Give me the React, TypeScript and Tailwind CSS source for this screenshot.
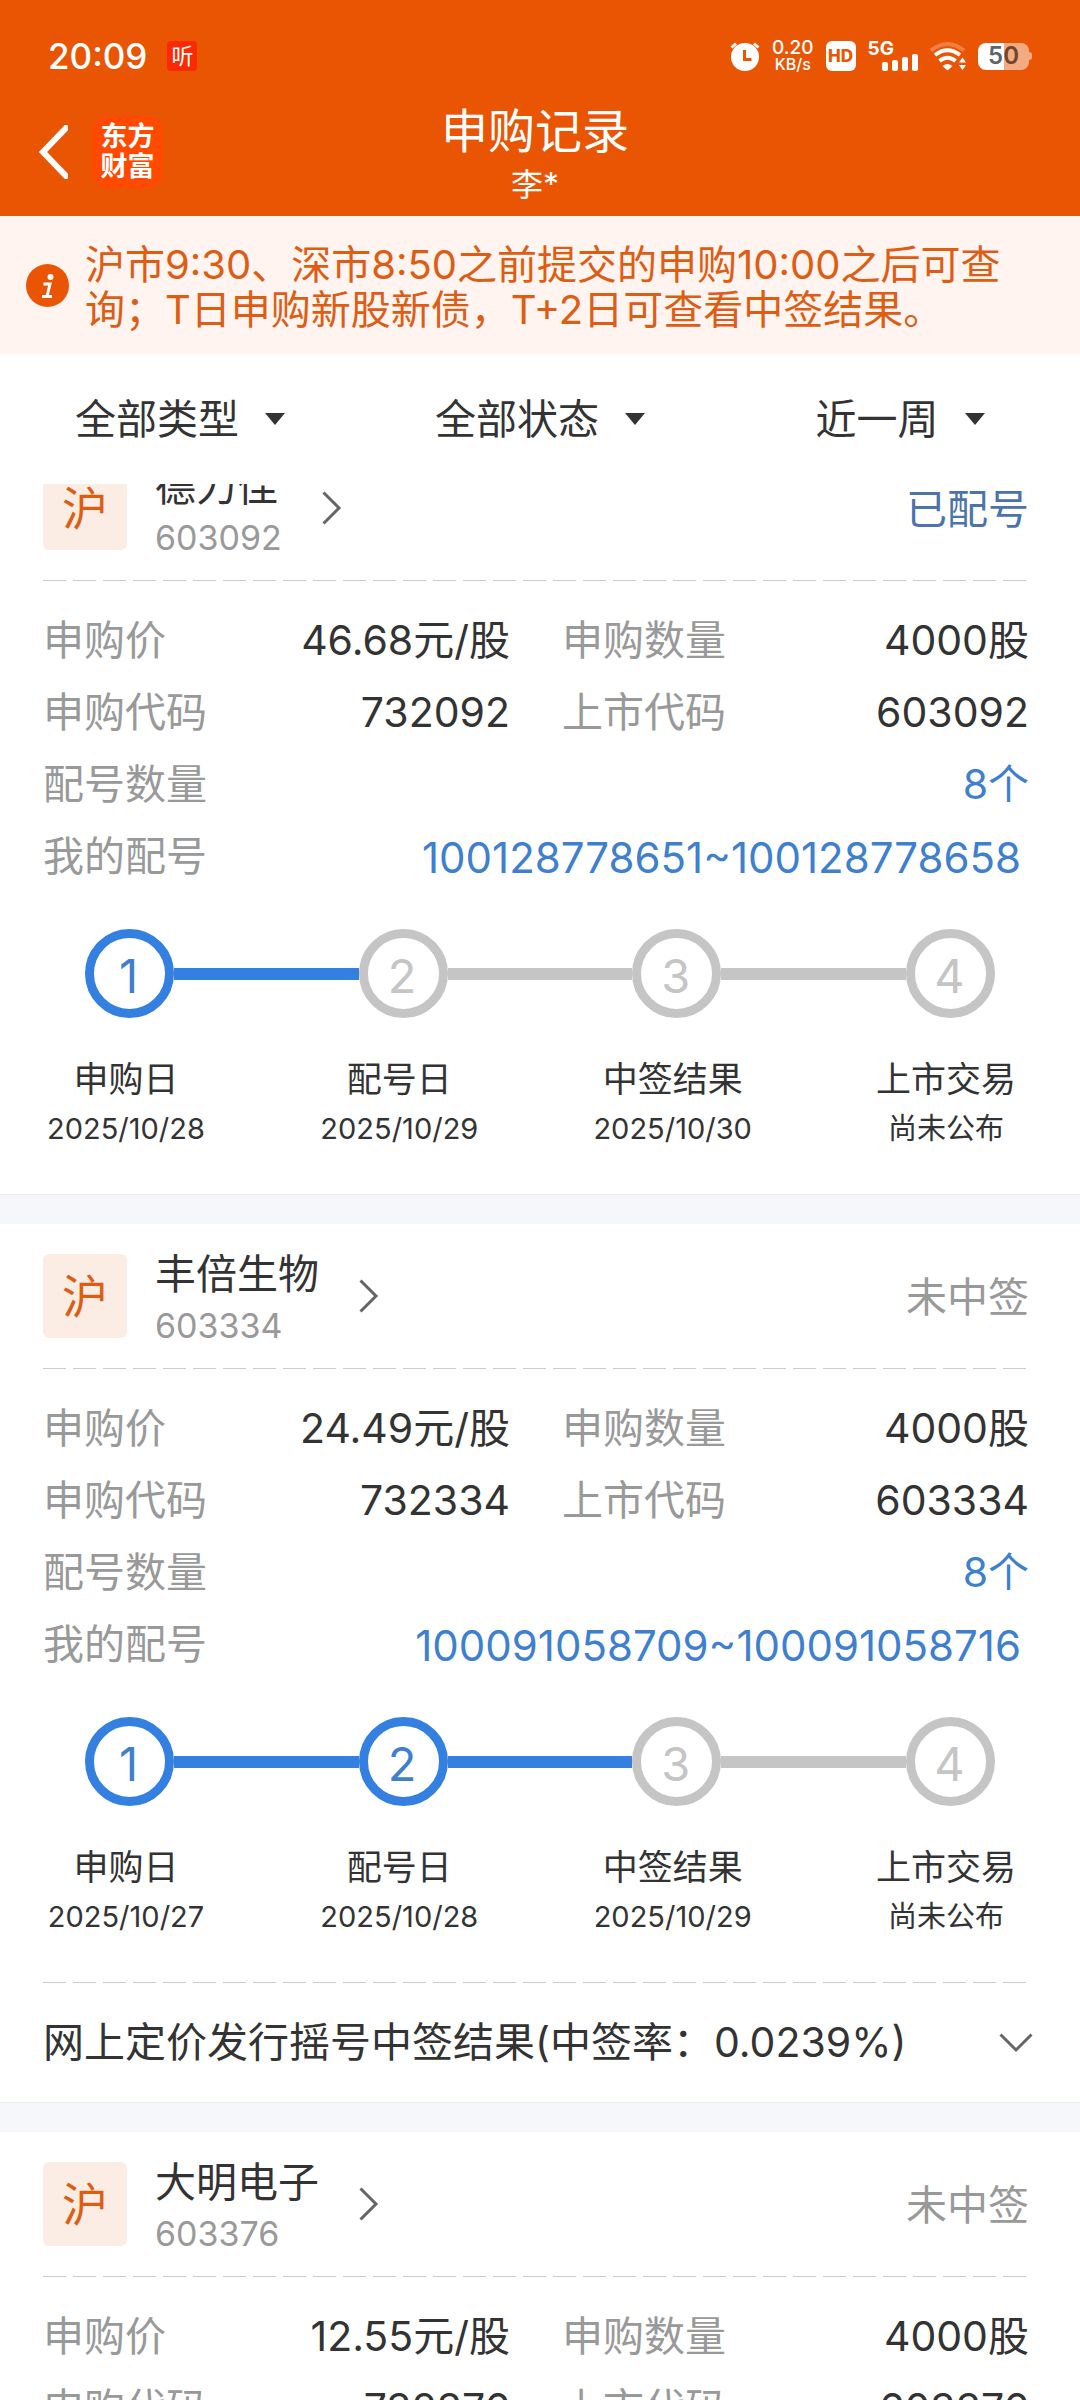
/**
 * Subscription records screen
 * Header, notice bar, filters and the scrollable list of IPO records
 */

import { useLayoutEffect, useRef, useState } from 'react';
import clsx from 'clsx';

interface Step {
  label: string;
  date: string;
}

interface SubscriptionRecord {
  market: string;
  name: string;
  code: string;
  status: string;
  statusTone: 'active' | 'muted';
  price: string;
  quantity: string;
  applyCode: string;
  allotCount: string;
  allotRange: string;
  currentStep: number;
  steps: Step[];
  summary?: string;
}

const buildSteps = (apply: string, allot: string, result: string): Step[] => [
  { label: '申购日', date: apply },
  { label: '配号日', date: allot },
  { label: '中签结果', date: result },
  { label: '上市交易', date: '尚未公布' },
];

const RECORDS: SubscriptionRecord[] = [
  {
    market: '沪',
    name: '德力佳',
    code: '603092',
    status: '已配号',
    statusTone: 'active',
    price: '46.68元/股',
    quantity: '4000股',
    applyCode: '732092',
    allotCount: '8个',
    allotRange: '100128778651~100128778658',
    currentStep: 1,
    steps: buildSteps('2025/10/28', '2025/10/29', '2025/10/30'),
  },
  {
    market: '沪',
    name: '丰倍生物',
    code: '603334',
    status: '未中签',
    statusTone: 'muted',
    price: '24.49元/股',
    quantity: '4000股',
    applyCode: '732334',
    allotCount: '8个',
    allotRange: '100091058709~100091058716',
    currentStep: 2,
    steps: buildSteps('2025/10/27', '2025/10/28', '2025/10/29'),
    summary: '网上定价发行摇号中签结果(中签率：0.0239%)',
  },
  {
    market: '沪',
    name: '大明电子',
    code: '603376',
    status: '未中签',
    statusTone: 'muted',
    price: '12.55元/股',
    quantity: '4000股',
    applyCode: '732376',
    allotCount: '8个',
    allotRange: '100065120331~100065120338',
    currentStep: 2,
    steps: buildSteps('2025/10/24', '2025/10/27', '2025/10/28'),
  },
];

const FILTERS = [
  { id: 'type', title: '类型', options: ['全部类型'] },
  { id: 'status', title: '状态', options: ['全部状态'] },
  { id: 'range', title: '时间', options: ['近一周'] },
];

const StatusBar: React.FC = () => (
  <div className="flex h-[88px] items-center justify-between pt-6 pl-12 pr-12 text-white">
    <div className="flex items-center gap-5">
      <span className="text-[35px] leading-10 font-medium">20:09</span>
      <span className="flex size-[30px] items-center justify-center rounded bg-[#fa2a05] text-[22px] leading-none">
        听
      </span>
    </div>

    <div className="flex items-center gap-3">
      {/* Alarm */}
      <svg className="h-[30px] w-[30px]" viewBox="0 0 30 30" fill="none">
        <circle cx="15" cy="16" r="14" fill="#fff" />
        <path d="M1.5 6.5 6 2.5M28.5 6.5 24 2.5" stroke="#fff" strokeWidth="3" />
        <path d="M14.5 9v9.5h7" stroke="#ea5504" strokeWidth="3" />
      </svg>
      <div className="flex flex-col items-center font-medium">
        <span className="text-[19px] leading-4">0.20</span>
        <span className="text-[16px] leading-4">KB/s</span>
      </div>
      <span className="flex h-[30px] w-[30px] items-center justify-center rounded-md bg-white text-[17px] leading-none font-extrabold text-[#ea5504]">
        HD
      </span>
      {/* Mobile signal */}
      <div className="flex h-[30px] items-start">
        <span className="text-[19px] leading-4 font-bold">5G</span>
        <svg className="-ml-3 h-[30px] w-9" viewBox="0 0 36 30" fill="#fff">
          <rect x="0" y="21" width="6" height="9" rx="2" />
          <rect x="10" y="19" width="6" height="11" rx="2" />
          <rect x="20" y="16" width="6" height="14" rx="2" />
          <rect x="30" y="13" width="6" height="17" rx="2" />
        </svg>
      </div>
      {/* Wi-Fi */}
      <svg className="h-[30px] w-9" viewBox="0 0 36 30" fill="none">
        <path d="M1 9.5Q17.500 -3.500 34 9.500" stroke="#fff" strokeOpacity=".25" strokeWidth="4" />
        <path d="M5 14Q17.500 4.500 30 14" stroke="#fff" strokeWidth="4" />
        <path d="M9.500 20Q17.500 13.500 25.500 20" stroke="#fff" strokeWidth="4" />
        <path d="M12.500 25Q17.500 21 22.500 25L17.500 29.500Z" fill="#fff" />
        <path d="M29 21.500 32.500 16.500 36 21.500ZM29 24 32.500 29 36 24Z" fill="#fff" />
      </svg>
      {/* Battery */}
      <div className="flex items-center">
        <div className="flex h-[27px] w-[51px] items-center justify-center overflow-hidden rounded-lg bg-linear-to-r from-white from-50% to-white/50 to-50% text-[24px] leading-none font-semibold">
          <span className="text-[#5f6468]">5</span>
          <span className="text-[#6e452f]">0</span>
        </div>
        <span className="h-2 w-[3px] rounded-r-sm bg-white/50" />
      </div>
    </div>
  </div>
);

const NavBar: React.FC = () => (
  <div className="grid h-32 grid-cols-[1fr_auto_1fr] items-center pr-12 pl-[38px] text-white">
    <div className="flex items-center gap-6">
      <button type="button" aria-label="返回">
        <svg className="h-[54px] w-[30px]" viewBox="0 0 30 54" fill="none">
          <path d="M28 3 5 27l23 24" stroke="#fff" strokeWidth="6" strokeLinecap="round" />
        </svg>
      </button>
      <div className="flex h-[72px] w-[71px] flex-col items-center justify-center rounded-2xl bg-[#ff4a00] text-[27px] leading-[30px] font-bold">
        <span>东方</span>
        <span>财富</span>
      </div>
    </div>
    <div className="pt-1 text-center">
      <h1 className="text-[47px] leading-[62px]">申购记录</h1>
      <p className="text-[32px] leading-[46px]">李*</p>
    </div>
  </div>
);

const NoticeBar: React.FC = () => (
  <div className="flex items-center gap-4 bg-[#fff4ef] py-[22px] pr-[60px] pl-[26px] text-[#dd5d15]">
    <svg className="h-[43px] w-[43px] shrink-0" viewBox="0 0 43 43">
      <circle cx="21.500" cy="21.500" r="21.500" fill="#ea5504" />
      <circle cx="24.500" cy="13" r="3" fill="#fff" />
      <path d="M17.500 20h6.500l-3 12.500M16 32.500h10" stroke="#fff" strokeWidth="3" fill="none" />
    </svg>
    <p className="pt-1 text-[40px] leading-[45px]">
      沪市9:30、深市8:50之前提交的申购10:00之后可查询；T日申购新股新债，T+2日可查看中签结果。
    </p>
  </div>
);

const FilterBar: React.FC = () => (
  <div className="grid h-[130px] shrink-0 grid-cols-3 items-center bg-white">
    {FILTERS.map((filter) => (
      <label key={filter.id} className="relative mx-auto flex items-center">
        <select
          aria-label={filter.title}
          className="appearance-none bg-transparent pr-[46px] text-[41px] leading-[60px] text-[#333] outline-none"
        >
          {filter.options.map((option) => (
            <option key={option}>{option}</option>
          ))}
        </select>
        <svg
          className="pointer-events-none absolute right-0 h-3 w-5"
          viewBox="0 0 20 12"
          fill="#333"
        >
          <path d="M0 0h20L10 12Z" />
        </svg>
      </label>
    ))}
  </div>
);

const DashedLine: React.FC = () => (
  <div className="h-px bg-[repeating-linear-gradient(90deg,#ccc_0_23px,transparent_23px_30px)]" />
);

interface FieldProps {
  label: string;
  value: string;
  wide?: boolean;
  valueClass?: string;
}

const Field: React.FC<FieldProps> = ({ label, value, wide, valueClass = 'text-[#333]' }) => (
  <div className={clsx('flex h-[72px] items-center justify-between', wide && 'col-span-2')}>
    <dt className="text-[#999]">{label}</dt>
    <dd className={valueClass}>{value}</dd>
  </div>
);

const Stepper: React.FC<{ steps: Step[]; current: number }> = ({ steps, current }) => (
  <div className="pt-9 pb-10">
    <div className="flex items-center pr-[34px] pl-[42px]">
      {steps.map((step, index) => (
        <div key={step.label} className={clsx('flex items-center', index > 0 && 'flex-1')}>
          {index > 0 && (
            <span
              className={clsx('h-3 flex-1', index <= current ? 'bg-[#3480e0]' : 'bg-[#c5c5c5]')}
            />
          )}
          <span
            className={clsx(
              'flex size-[89px] items-center justify-center rounded-full border-[9px] pt-1 pr-0.5 text-[47px] leading-none',
              index < current
                ? 'border-[#3480e0] text-[#3f7fcf]'
                : 'border-[#c5c5c5] text-[#c5c5c5]'
            )}
          >
            {index + 1}
          </span>
        </div>
      ))}
    </div>
    <div className="mt-9 flex justify-between text-center text-[#333]">
      {steps.map((step) => (
        <div key={step.label} className="w-[166px]">
          <p className="text-[35px] leading-[50px]">{step.label}</p>
          <p className="text-[29px] leading-[50px]">{step.date}</p>
        </div>
      ))}
    </div>
  </div>
);

const RecordCard: React.FC<{ record: SubscriptionRecord }> = ({ record }) => {
  const [expanded, setExpanded] = useState(false);

  return (
    <article className="bg-white pr-[51px] pl-[43px] text-[41px]">
      <header className="flex h-36 items-center justify-between">
        <a href="#" className="flex items-center">
          <span className="flex size-[84px] items-center justify-center rounded-md bg-[#fcede4] text-[46px] leading-none text-[#dd5d15]">
            {record.market}
          </span>
          <span className="ml-7 flex flex-col pt-1.5">
            <span className="leading-[54px] text-[#333]">{record.name}</span>
            <span className="text-[34px] leading-[50px] text-[#999]">{record.code}</span>
          </span>
          <svg className="ml-10 h-[34px] w-5" viewBox="0 0 20 34" fill="none">
            <path d="M1.500 1.500 17 17 1.500 32.500" stroke="#666" strokeWidth="3" />
          </svg>
        </a>
        <span
          className={clsx('pt-1', record.statusTone === 'active' ? 'text-[#4a74ab]' : 'text-[#999]')}
        >
          {record.status}
        </span>
      </header>
      <DashedLine />

      <dl className="grid grid-cols-2 gap-x-[52px] pt-6">
        <Field label="申购价" value={record.price} />
        <Field label="申购数量" value={record.quantity} />
        <Field label="申购代码" value={record.applyCode} />
        <Field label="上市代码" value={record.code} />
        <Field label="配号数量" value={record.allotCount} wide valueClass="text-[#3f7fcf]" />
        <Field
          label="我的配号"
          value={record.allotRange}
          wide
          valueClass="pr-2 text-[42px] text-[#3f7fcf]"
        />
      </dl>

      <Stepper steps={record.steps} current={record.currentStep} />

      {record.summary && (
        <>
          <DashedLine />
          <button
            type="button"
            aria-expanded={expanded}
            onClick={() => setExpanded(!expanded)}
            className="flex h-[119px] w-full items-center justify-between text-left text-[#333]"
          >
            <span>{record.summary}</span>
            <svg
              className={clsx('-mr-1 h-5 w-[34px]', expanded && 'rotate-180')}
              viewBox="0 0 34 20"
              fill="none"
            >
              <path d="M1.500 1.500 17 17 32.500 1.500" stroke="#666" strokeWidth="3" />
            </svg>
          </button>
        </>
      )}
    </article>
  );
};

const App: React.FC = () => {
  const listRef = useRef<HTMLElement>(null);

  // The list opens slightly scrolled, under the filter bar
  useLayoutEffect(() => {
    if (listRef.current) {
      listRef.current.scrollTop = 48;
    }
  }, []);

  return (
    <div className="flex h-screen flex-col bg-white font-['Inter','Noto_Sans_CJK_SC',sans-serif]">
      <div className="bg-[#ea5504]">
        <StatusBar />
        <NavBar />
      </div>
      <NoticeBar />
      <FilterBar />

      <main ref={listRef} className="min-h-0 flex-1 overflow-y-auto [scrollbar-width:none]">
        {RECORDS.map((record) => (
          <section key={record.code}>
            <RecordCard record={record} />
            <div className="h-[30px] border-t border-[#e9ebee] bg-[#f6f7fa]" />
          </section>
        ))}
      </main>
    </div>
  );
};

export default App;
